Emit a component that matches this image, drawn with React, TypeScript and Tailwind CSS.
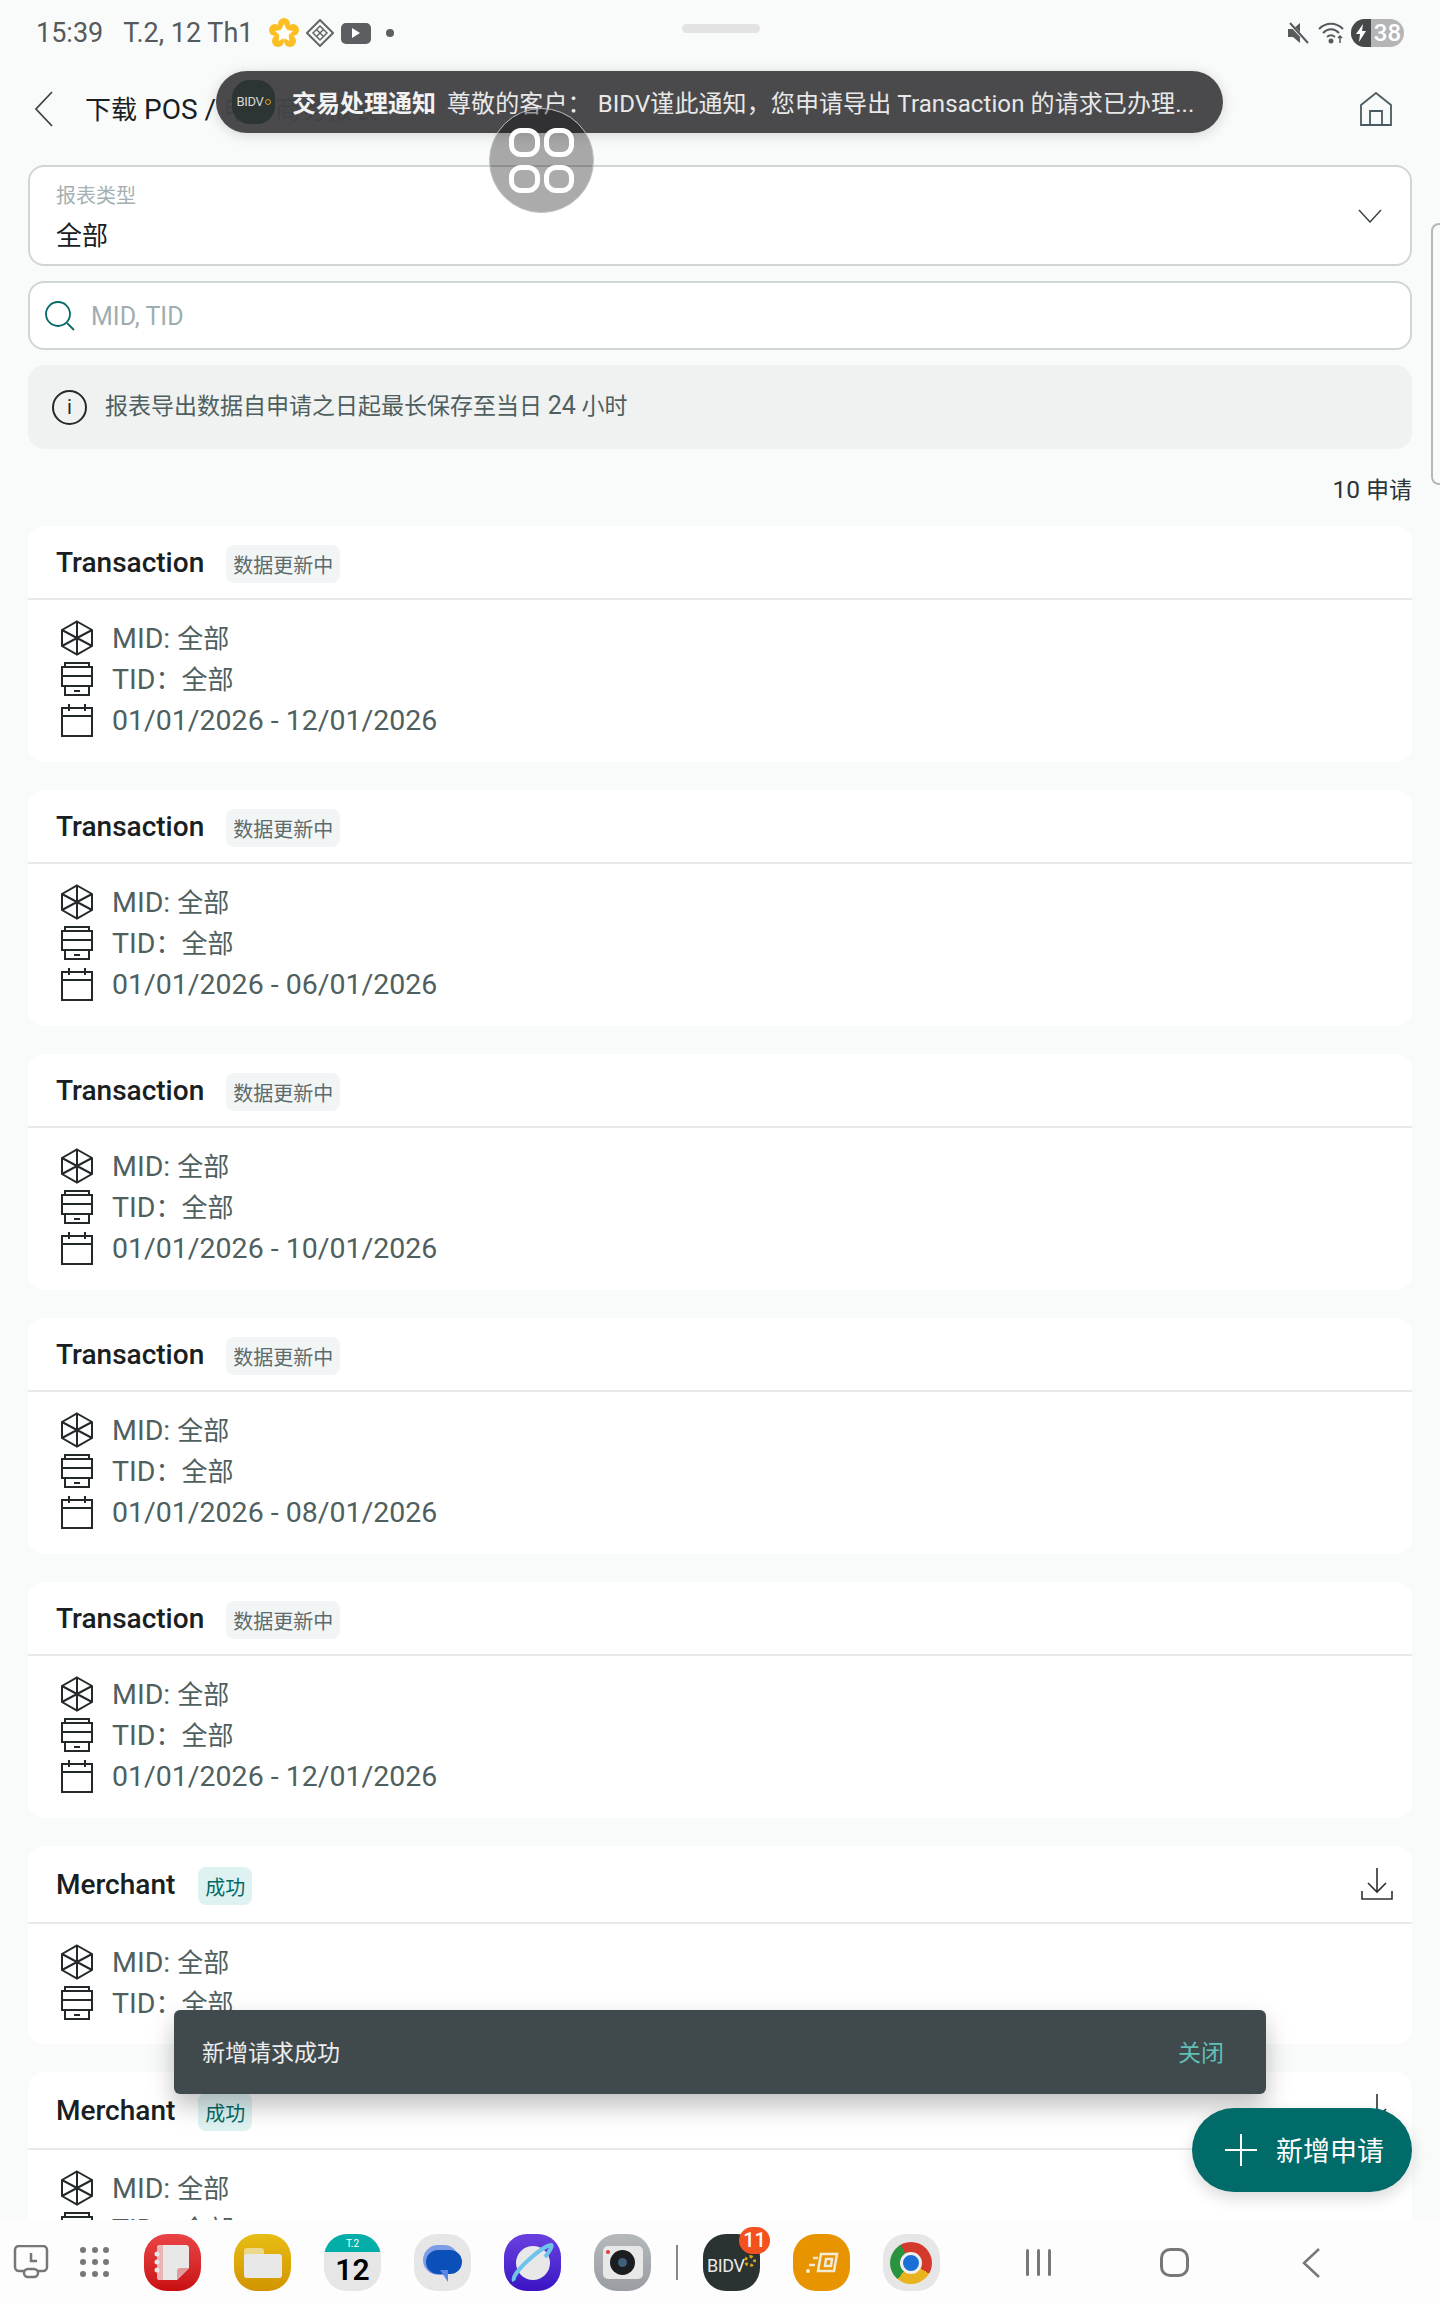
import React from 'react';

const Squircle = ({ className, children }: { className: string; children?: React.ReactNode }) => (
  <div className={`relative w-[57px] h-[57px] rounded-[23px] overflow-hidden shrink-0 ${className}`}>{children}</div>
);

const MidIcon = () => (
  <svg width="34" height="36" viewBox="0 0 34 36" fill="none" stroke="#23292b" strokeWidth="2">
    <path d="M17 1.5 32 10v16l-15 8.500L2 26V10z" />
    <path d="M17 1.500v33M2 10l30 16M32 10 2 26" />
  </svg>
);

const TidIcon = () => (
  <svg width="34" height="36" viewBox="0 0 34 36" fill="none" stroke="#23292b" strokeWidth="2">
    <path d="M5 6V2h24v4" />
    <rect x="2" y="6" width="30" height="19" />
    <path d="M2 15h30M5 25v9h24v-9M14 30h6" />
  </svg>
);

const CalIcon = () => (
  <svg width="34" height="34" viewBox="0 0 34 34" fill="none" stroke="#23292b" strokeWidth="2">
    <rect x="2" y="5" width="30" height="28" />
    <path d="M2 13h30M9 1v7M25 1v7" />
  </svg>
);

const DownloadIcon = () => (
  <svg width="32" height="32" viewBox="0 0 32 32" fill="none" stroke="#2b3133" strokeWidth="1.600">
    <path d="M16 0v24M7 15l9 9 9-9M1 23v8h30v-8" />
  </svg>
);

const InfoRow = ({ icon, children }: { icon: React.ReactNode; children: React.ReactNode }) => (
  <div className="flex items-center h-[41px]">
    <div className="w-[34px] flex justify-center shrink-0">{icon}</div>
    <span className="ml-[18px] mt-[2px] text-[28.500px] leading-[41px] text-[#4f5f60] whitespace-pre">{children}</span>
  </div>
);

const All = () => <span className="text-[26px]">全部</span>;

const Card = ({ type, date, ok }: { type: string; date?: string; ok?: boolean }) => (
  <div className={`bg-white rounded-2xl shrink-0 ${ok ? 'h-[198px]' : 'h-[236px]'}`}>
    <div className={`flex items-center pl-[28px] pr-[19px] border-b-2 border-[#e8eaea] ${ok ? 'h-[78px]' : 'h-[74px]'}`}>
      <span className="mt-[2px] text-[28px] font-medium text-[#182022] leading-none">{type}</span>
      {ok ? (
        <span className="ml-[23px] mt-[3px] px-[7px] h-[38px] leading-[43px] rounded-lg bg-[#dff2f2] text-[20px] text-[#046a66]">成功</span>
      ) : (
        <span className="ml-[22px] mt-[3px] px-[7px] h-[38px] leading-[43px] rounded-lg bg-[#f1f5f6] text-[20px] text-[#5d6b6b]">数据更新中</span>
      )}
      {ok && <div className="ml-auto"><DownloadIcon /></div>}
    </div>
    <div className="pl-[32px] pt-[17px]">
      <InfoRow icon={<MidIcon />}>MID: <All /></InfoRow>
      <InfoRow icon={<TidIcon />}>TID<span className="text-[26px]">：</span><All /></InfoRow>
      {date && <InfoRow icon={<CalIcon />}>{date}</InfoRow>}
    </div>
  </div>
);

export default function App() {
  return (
    <div
      className="relative w-[1440px] h-[2304px] overflow-hidden flex flex-col bg-[#f9fbfa]"
      style={{ fontFamily: 'Roboto, "Noto Sans CJK SC", sans-serif' }}
    >
      {/* status bar */}
      <div className="relative h-[70px] shrink-0 flex items-center pl-[36px] pr-[36px] text-[27px] text-[#555a5c] -mt-[2px]">
        <span>15:39</span>
        <span className="ml-[20px]">T.2, 12 Th1</span>
        <svg className="ml-[16px]" width="30" height="30" viewBox="0 0 30 30">
          <g fill="#fbbf24">
            <circle cx="15" cy="6" r="6" /><circle cx="6" cy="12" r="6" /><circle cx="24" cy="12" r="6" />
            <circle cx="9" cy="23" r="6" /><circle cx="21" cy="23" r="6" />
          </g>
          <path d="m15 6 3 6 6 1-4.500 4 1 6-5.500-3-5.500 3 1-6L6 13l6-1z" fill="#fff" />
        </svg>
        <svg className="ml-[7px]" width="28" height="28" viewBox="0 0 28 28" fill="none" stroke="#666" strokeWidth="2">
          <path d="M14 1 27 14 14 27 1 14z" />
          <path d="m14 7 7 7-7 7-7-7zM10.500 10.500l7 7M17.500 10.500l-7 7" strokeWidth="1.500" />
        </svg>
        <div className="ml-[7px] w-[30px] h-[21px] rounded-[5px] bg-[#5c5f61] flex items-center justify-center">
          <div className="w-0 h-0 border-y-[5px] border-y-transparent border-l-[8px] border-l-white" />
        </div>
        <div className="ml-[15px] w-[8px] h-[8px] rounded-full bg-[#5c5f61]" />
        <div className="absolute left-[682px] top-[26px] w-[78px] h-[9px] rounded-full bg-[#e3e3e3]" />
        <div className="ml-auto flex items-center">
          <svg width="22" height="22" viewBox="0 0 22 22" fill="#555a5c">
            <path d="M1 7h5l7-6v20l-7-6H1z" />
            <path d="M2 1l19 20" stroke="#f9fbfa" strokeWidth="3" />
            <path d="M3 1l18 20" stroke="#555a5c" strokeWidth="2" />
          </svg>
          <svg className="ml-[9px]" width="28" height="24" viewBox="0 0 28 24" fill="none" stroke="#555a5c" strokeWidth="2">
            <path d="M1 8c7-7 17-7 24 0M5 12c5-5 11-5 16 0M9 16c3-2.500 5-2.500 8 0" />
            <circle cx="13" cy="20" r="1.500" fill="#555a5c" />
            <path d="M22 22v-7m-2 2 2-2 2 2" strokeWidth="1.500" />
          </svg>
          <div className="ml-[5px] w-[53px] h-[28px] rounded-full overflow-hidden flex bg-[#b5b5b5]">
            <div className="w-[20px] bg-[#45494a] flex items-center justify-center">
              <svg width="12" height="18" viewBox="0 0 12 18" fill="#fff"><path d="M8 0 1 10h4l-1 8 7-11H7z" /></svg>
            </div>
            <span className="flex-1 text-center text-[24px] leading-[28px] text-white font-medium">38</span>
          </div>
        </div>
      </div>

      {/* header */}
      <div className="h-[81px] mb-[16px] shrink-0 flex items-center pl-[34px] pr-[48px]">
        <svg width="20" height="36" viewBox="0 0 20 36" fill="none" stroke="#3c4547" strokeWidth="1.800"><path d="M18 1 2 18l16 17" /></svg>
        <span className="ml-[31px] mt-[3px] text-[28px] text-[#182022] whitespace-pre"><span className="text-[26px]">下载</span> POS / <span className="text-[26px]">电子商务报表</span></span>
        <svg className="ml-auto" width="32" height="34" viewBox="0 0 32 34" fill="none" stroke="#4a5a60" strokeWidth="1.800">
          <path d="M1 33V13L16 1l15 12v20zM10 33V19h12v14" />
        </svg>
      </div>

      <div className="px-[28px] flex flex-col flex-1 min-h-0 overflow-hidden">
        {/* report type select */}
        <div className="h-[101px] shrink-0 rounded-2xl border-2 border-[#d0d5d8] bg-white flex items-center pl-[26px] pr-[28px]">
          <div className="pt-[6px]">
            <div className="text-[20px] leading-[24px] text-[#a4b0b2]">报表类型</div>
            <div className="mt-[11px] text-[26px] leading-[34px] text-[#182022]">全部</div>
          </div>
          <svg className="ml-auto" width="24" height="14" viewBox="0 0 24 14" fill="none" stroke="#3c4547" strokeWidth="1.500"><path d="m1 1 11 12L23 1" /></svg>
        </div>

        {/* search */}
        <div className="mt-[15px] h-[69px] shrink-0 rounded-2xl border-2 border-[#d0d5d8] bg-white flex items-center pl-[15px]">
          <svg width="30" height="30" viewBox="0 0 30 30" fill="none" stroke="#046a66" strokeWidth="1.800">
            <circle cx="13" cy="13" r="12" /><path d="m22 22 7 7" />
          </svg>
          <span className="ml-[16px] pt-[2px] text-[25px] text-[#9fadb0]">MID, TID</span>
        </div>

        {/* note */}
        <div className="mt-[15px] h-[84px] shrink-0 rounded-2xl bg-[#f0f2f2] flex items-center pl-[24px]">
          <div className="w-[35px] h-[35px] rounded-full border-2 border-[#23292b] flex items-center justify-center text-[20px] text-[#23292b] leading-none">i</div>
          <span className="ml-[18px] -mt-[2px] text-[23px] text-[#4f5f60] whitespace-pre">报表导出数据自申请之日起最长保存至当日 <span className="text-[25px]">24</span> 小时</span>
        </div>

        <div className="mt-[23px] h-[34px] pt-[1px] leading-[34px] shrink-0 text-right text-[24.500px] text-[#2b3436]">10 <span className="text-[23px]">申请</span></div>

        <div className="mt-[20px] flex flex-col gap-[28px]">
          <Card type="Transaction" date="01/01/2026 - 12/01/2026" />
          <Card type="Transaction" date="01/01/2026 - 06/01/2026" />
          <Card type="Transaction" date="01/01/2026 - 10/01/2026" />
          <Card type="Transaction" date="01/01/2026 - 08/01/2026" />
          <Card type="Transaction" date="01/01/2026 - 12/01/2026" />
          <Card type="Merchant" ok />
          <Card type="Merchant" ok />
        </div>
      </div>

      {/* task bar */}
      <div className="relative h-[84px] shrink-0 bg-[#fdfdfd] flex items-center pl-[13px]">
        <svg width="36" height="34" viewBox="0 0 36 34" fill="none" stroke="#777" strokeWidth="2.500">
          <path d="M12 26H6a4 4 0 0 1-4-4V5a4 4 0 0 1 4-4h24a4 4 0 0 1 4 4v17a4 4 0 0 1-4 4h-6" />
          <rect x="11" y="24" width="14" height="8" rx="4" />
          <path d="M18 8v8h6" />
        </svg>
        <div className="ml-[31px] grid grid-cols-3 gap-x-[6px] gap-y-[6px] w-[29px]">
          {Array.from({ length: 9 }).map((_, i) => (
            <div key={i} className="w-[6px] h-[6px] rounded-full bg-[#777]" />
          ))}
        </div>
        <div className="ml-[35px] flex gap-[33px] items-center">
          <Squircle className="bg-gradient-to-b from-[#ea4345] to-[#c90b10]">
            <svg className="absolute inset-0" width="57" height="57" viewBox="0 0 57 57">
              <path d="M16 11h26a3 3 0 0 1 3 3v20L33 46H16a3 3 0 0 1-3-3V14a3 3 0 0 1 3-3z" fill="#e8e8e8" />
              <path d="M16 11h3v35h-3a3 3 0 0 1-3-3V14a3 3 0 0 1 3-3z" fill="#e8b4b4" />
              <path d="M45 34 33 46V37a3 3 0 0 1 3-3z" fill="#e09a9a" />
              <g fill="#e8e8e8"><circle cx="13" cy="20" r="2.500" /><circle cx="13" cy="28" r="2.500" /><circle cx="13" cy="36" r="2.500" /></g>
            </svg>
          </Squircle>
          <Squircle className="bg-gradient-to-b from-[#e8bd14] to-[#d19400]">
            <div className="absolute left-[10px] top-[14px] w-[20px] h-[10px] rounded-t-[3px] bg-[#ecd88a]" />
            <div className="absolute left-[10px] top-[20px] w-[38px] h-[24px] rounded-[3px] bg-[#e8e8e8]" />
          </Squircle>
          <Squircle className="bg-[#e6e6e6]">
            <div className="h-[18px] bg-[#04aea8] text-white text-[10px] leading-[20px] text-center">T.2</div>
            <div className="text-[30px] leading-[36px] font-semibold text-black text-center">12</div>
          </Squircle>
          <Squircle className="bg-[#e6e6e6]">
            <div className="absolute left-[9px] top-[11px] w-[36px] h-[30px] rounded-[15px] bg-[#7d9ce8]" />
            <div className="absolute left-[12px] top-[16px] w-[36px] h-[24px] rounded-[12px] bg-[#0b50b8]" />
            <div className="absolute left-[26px] top-[36px] w-0 h-0 border-t-[12px] border-t-[#5b84e6] border-l-[8px] border-l-transparent" />
          </Squircle>
          <Squircle className="bg-gradient-to-b from-[#6a3fe0] to-[#3b12c4]">
            <div className="absolute left-[12px] top-[12px] w-[34px] h-[34px] rounded-full bg-[#e8e8e8]" />
            <svg className="absolute inset-0" width="57" height="57" viewBox="0 0 57 57" fill="none" strokeWidth="4">
              <path d="M10 47C6 40 38 12 47 11c2 0-1 6-6 12" stroke="#6ec3ea" />
            </svg>
          </Squircle>
          <Squircle className="bg-gradient-to-b from-[#b4b9bb] to-[#9a9da2]">
            <div className="absolute left-[9px] top-[12px] w-[40px] h-[33px] rounded-[5px] bg-[#e8e8e8]" />
            <div className="absolute left-[16px] top-[16px] w-[25px] h-[25px] rounded-full bg-[#1c1d20] flex items-center justify-center">
              <div className="w-[9px] h-[9px] rounded-full bg-[#3f5f7a]" />
            </div>
            <div className="absolute left-[12px] top-[16px] w-[4px] h-[4px] rounded-full bg-[#e53935]" />
          </Squircle>
        </div>
        <div className="ml-[25px] w-[2px] h-[35px] bg-[#888]" />
        <Squircle className="ml-[25px] bg-[#2a3331]">
          <div className="absolute left-[4px] top-[22px] text-[18px] leading-[20px] tracking-tight text-[#e8e8e8]">BIDV</div>
          <div className="absolute left-[41px] top-[21px] w-[12px] h-[12px] rounded-full border-[3px] border-dotted border-[#d9a21b]" />
        </Squircle>
        <div className="absolute left-[739px] top-[7px] w-[31px] h-[27px] rounded-full bg-[#f4511e] text-white text-[20px] leading-[27px] font-medium text-center">11</div>
        <Squircle className="ml-[33px] bg-[#e89400]">
          <svg className="absolute inset-0" width="57" height="57" viewBox="0 0 57 57" fill="none" stroke="#f3ead8" strokeWidth="2.500">
            <path d="M28 20h16l-3 17H25zM33 25h6l-1 7h-6zM20 24h5M16 31h6" />
            <circle cx="15" cy="37" r="2" fill="#f3ead8" stroke="none" />
          </svg>
        </Squircle>
        <Squircle className="ml-[33px] bg-[#e6e6e6]">
          <div className="absolute left-[7px] top-[8px] w-[42px] h-[42px] rounded-full bg-[conic-gradient(#d33a2c_0deg_120deg,#e8b31f_120deg_220deg,#2a933f_220deg_330deg,#d33a2c_330deg_360deg)]" />
          <div className="absolute left-[17px] top-[18px] w-[22px] h-[22px] rounded-full bg-[#1a6fd8] border-[3px] border-[#f0f0f0]" />
        </Squircle>
        <div className="absolute left-[1026px] top-[29px] flex gap-[8px]">
          <div className="w-[3px] h-[27px] rounded-full bg-[#777]" />
          <div className="w-[3px] h-[27px] rounded-full bg-[#777]" />
          <div className="w-[3px] h-[27px] rounded-full bg-[#777]" />
        </div>
        <div className="absolute left-[1160px] top-[28px] w-[29px] h-[29px] rounded-[10px] border-[3px] border-[#777]" />
        <svg className="absolute left-[1302px] top-[28px]" width="18" height="30" viewBox="0 0 18 30" fill="none" stroke="#777" strokeWidth="2.500">
          <path d="M17 1 2 15l15 14" />
        </svg>
      </div>

      {/* side panel handle */}
      <div className="absolute left-[1431px] top-[223px] w-[9px] h-[262px] rounded-tl-lg rounded-bl-lg border-l-2 border-t-2 border-b-2 border-[#b5b8b8]" />

      {/* heads-up notification */}
      <div className="absolute left-[216px] top-[71px] w-[1007px] h-[62px] rounded-full bg-[#444446]/97 shadow-[0_2px_14px_rgba(0,0,0,0.15)] flex items-center pl-[16px]">
        <div className="w-[43px] h-[44px] rounded-[18px] bg-[#2c3533] flex items-center justify-center text-[13px] tracking-tight text-[#d8d8d8]">
          BIDV<span className="ml-[1px] w-[6px] h-[6px] rounded-full border border-[#d9a21b]" />
        </div>
        <span className="ml-[17px] pt-[3px] text-[24px] font-bold text-[#f2f2f2]">交易处理通知</span>
        <span className="ml-[11px] pt-[3px] text-[24px] tracking-[0.1px] text-[#e8e8e8] whitespace-pre">尊敬的客户： BIDV谨此通知，您申请导出 Transaction 的请求已办理...</span>
      </div>

      {/* floating assistive button */}
      <div className="absolute left-[489px] top-[108px] w-[105px] h-[105px] rounded-full bg-black/33 border border-[#c0c0c0] grid grid-cols-2 gap-x-[4px] gap-y-[8px] p-[19px]">
        <div className="rounded-[12px] border-[5px] border-white" />
        <div className="rounded-[12px] border-[5px] border-white" />
        <div className="rounded-[12px] border-[5px] border-white" />
        <div className="rounded-[12px] border-[5px] border-white" />
      </div>

      {/* snackbar */}
      <div className="absolute left-[174px] top-[2010px] w-[1092px] h-[84px] rounded-md bg-[#404a4c] shadow-[0_12px_24px_rgba(0,0,0,0.25)] flex items-center justify-between pl-[28px] pr-[42px] pt-[4px]">
        <span className="text-[23px] text-[#ececec]">新增请求成功</span>
        <span className="text-[23px] text-[#5fc0b8]">关闭</span>
      </div>

      {/* add button */}
      <div className="absolute left-[1192px] top-[2108px] w-[220px] h-[84px] rounded-full bg-[#006b68] shadow-[0_6px_16px_rgba(0,0,0,0.15)] flex items-center pl-[33px]">
        <svg width="32" height="32" viewBox="0 0 32 32" fill="none" stroke="#fff" strokeWidth="2"><path d="M16 0v32M0 16h32" /></svg>
        <span className="ml-[19px] pt-[4px] text-[27px] text-white">新增申请</span>
      </div>
    </div>
  );
}
